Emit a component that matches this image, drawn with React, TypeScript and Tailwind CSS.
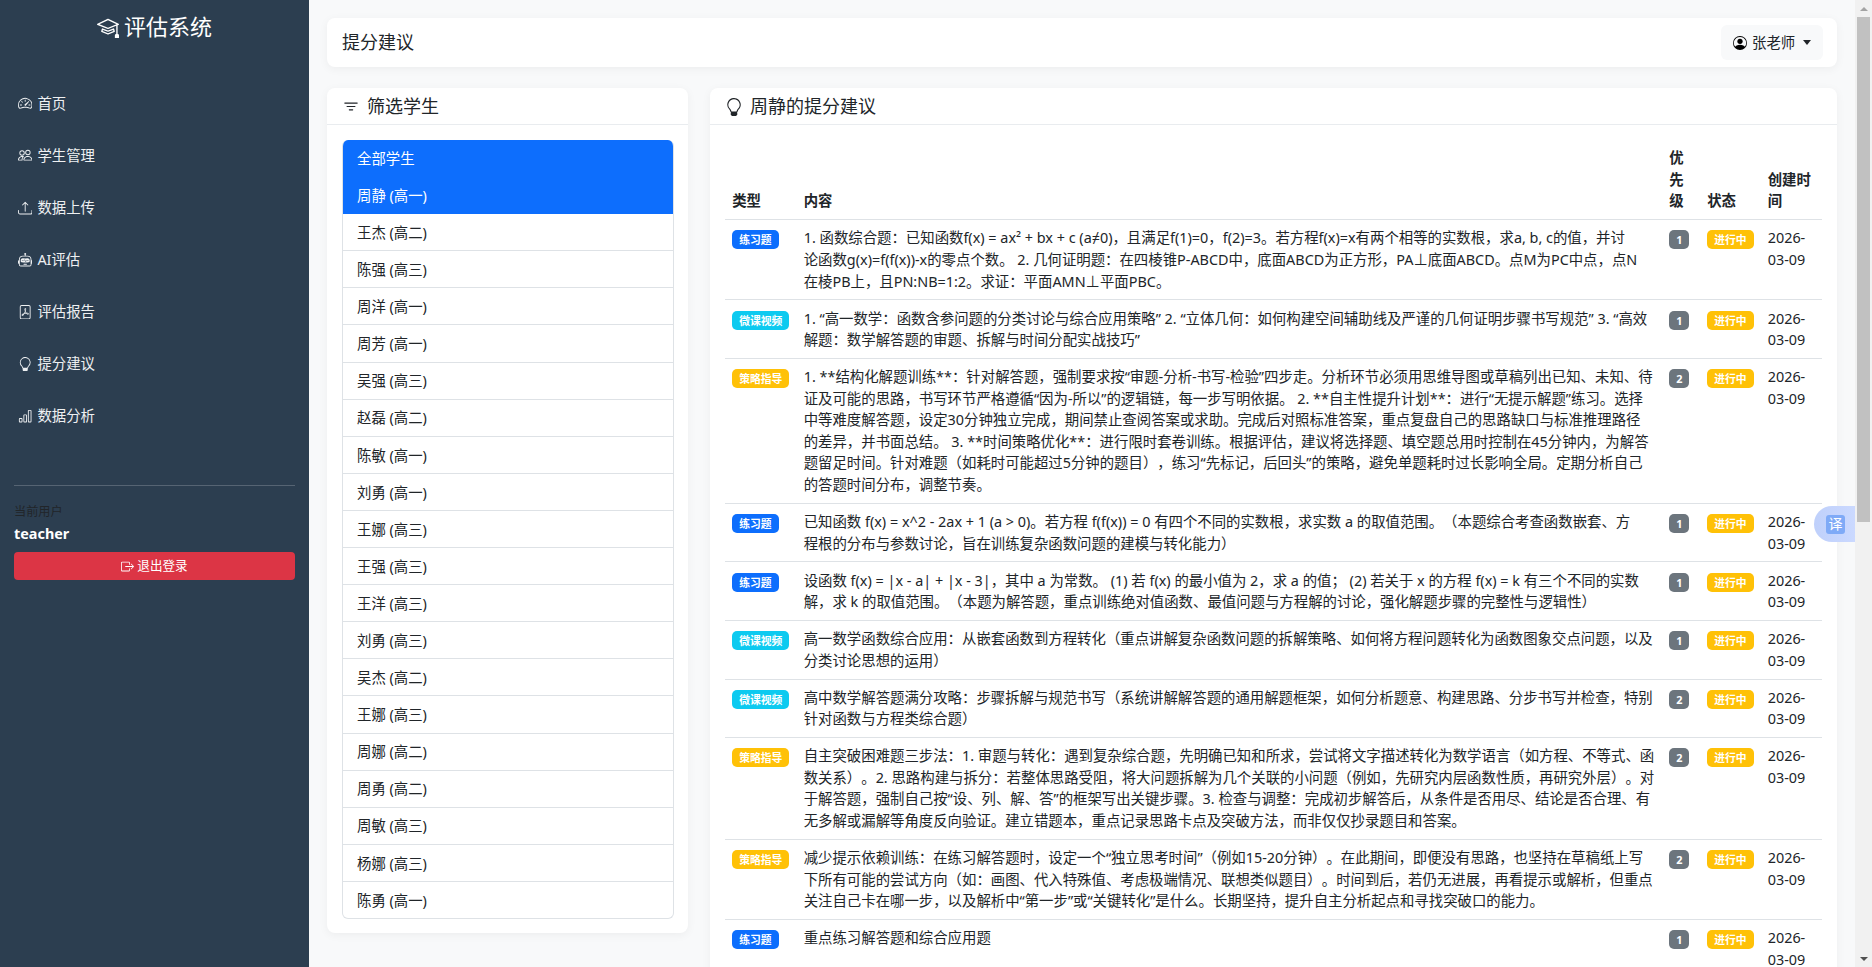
import {
  BsBarChart,
  BsBoxArrowRight,
  BsFilePdf,
  BsFilter,
  BsLightbulb,
  BsMortarboard,
  BsPeople,
  BsPersonCircle,
  BsRobot,
  BsSpeedometer2,
  BsUpload,
} from "react-icons/bs";

const navItems = [
  { label: "首页", icon: BsSpeedometer2 },
  { label: "学生管理", icon: BsPeople },
  { label: "数据上传", icon: BsUpload },
  { label: "AI评估", icon: BsRobot },
  { label: "评估报告", icon: BsFilePdf },
  { label: "提分建议", icon: BsLightbulb },
  { label: "数据分析", icon: BsBarChart },
];

const students = [
  "王杰 (高二)",
  "陈强 (高三)",
  "周洋 (高一)",
  "周芳 (高一)",
  "吴强 (高三)",
  "赵磊 (高二)",
  "陈敏 (高一)",
  "刘勇 (高一)",
  "王娜 (高三)",
  "王强 (高三)",
  "王洋 (高三)",
  "刘勇 (高三)",
  "吴杰 (高二)",
  "王娜 (高三)",
  "周娜 (高二)",
  "周勇 (高二)",
  "周敏 (高三)",
  "杨娜 (高三)",
  "陈勇 (高一)",
];

type Kind = "练习题" | "微课视频" | "策略指导";

const kindColor: Record<Kind, string> = {
  练习题: "bg-[#0d6efd]",
  微课视频: "bg-[#0dcaf0]",
  策略指导: "bg-[#ffc107]",
};

// lines are kept as they break in the table
const rows: { kind: Kind; priority: number; lines: string[] }[] = [
  {
    kind: "练习题",
    priority: 1,
    lines: [
      "1. 函数综合题：已知函数f(x) = ax² + bx + c (a≠0)，且满足f(1)=0，f(2)=3。若方程f(x)=x有两个相等的实数根，求a, b, c的值，并讨",
      "论函数g(x)=f(f(x))-x的零点个数。 2. 几何证明题：在四棱锥P-ABCD中，底面ABCD为正方形，PA⊥底面ABCD。点M为PC中点，点N",
      "在棱PB上，且PN:NB=1:2。求证：平面AMN⊥平面PBC。",
    ],
  },
  {
    kind: "微课视频",
    priority: 1,
    lines: [
      "1. “高一数学：函数含参问题的分类讨论与综合应用策略” 2. “立体几何：如何构建空间辅助线及严谨的几何证明步骤书写规范” 3. “高效",
      "解题：数学解答题的审题、拆解与时间分配实战技巧”",
    ],
  },
  {
    kind: "策略指导",
    priority: 2,
    lines: [
      "1. **结构化解题训练**：针对解答题，强制要求按“审题-分析-书写-检验”四步走。分析环节必须用思维导图或草稿列出已知、未知、待",
      "证及可能的思路，书写环节严格遵循“因为-所以”的逻辑链，每一步写明依据。 2. **自主性提升计划**：进行“无提示解题”练习。选择",
      "中等难度解答题，设定30分钟独立完成，期间禁止查阅答案或求助。完成后对照标准答案，重点复盘自己的思路缺口与标准推理路径",
      "的差异，并书面总结。 3. **时间策略优化**：进行限时套卷训练。根据评估，建议将选择题、填空题总用时控制在45分钟内，为解答",
      "题留足时间。针对难题（如耗时可能超过5分钟的题目），练习“先标记，后回头”的策略，避免单题耗时过长影响全局。定期分析自己",
      "的答题时间分布，调整节奏。",
    ],
  },
  {
    kind: "练习题",
    priority: 1,
    lines: [
      "已知函数 f(x) = x^2 - 2ax + 1 (a > 0)。若方程 f(f(x)) = 0 有四个不同的实数根，求实数 a 的取值范围。（本题综合考查函数嵌套、方",
      "程根的分布与参数讨论，旨在训练复杂函数问题的建模与转化能力）",
    ],
  },
  {
    kind: "练习题",
    priority: 1,
    lines: [
      "设函数 f(x) = |x - a| + |x - 3|，其中 a 为常数。 (1) 若 f(x) 的最小值为 2，求 a 的值； (2) 若关于 x 的方程 f(x) = k 有三个不同的实数",
      "解，求 k 的取值范围。（本题为解答题，重点训练绝对值函数、最值问题与方程解的讨论，强化解题步骤的完整性与逻辑性）",
    ],
  },
  {
    kind: "微课视频",
    priority: 1,
    lines: [
      "高一数学函数综合应用：从嵌套函数到方程转化（重点讲解复杂函数问题的拆解策略、如何将方程问题转化为函数图象交点问题，以及",
      "分类讨论思想的运用）",
    ],
  },
  {
    kind: "微课视频",
    priority: 2,
    lines: [
      "高中数学解答题满分攻略：步骤拆解与规范书写（系统讲解解答题的通用解题框架，如何分析题意、构建思路、分步书写并检查，特别",
      "针对函数与方程类综合题）",
    ],
  },
  {
    kind: "策略指导",
    priority: 2,
    lines: [
      "自主突破困难题三步法：1. 审题与转化：遇到复杂综合题，先明确已知和所求，尝试将文字描述转化为数学语言（如方程、不等式、函",
      "数关系）。2. 思路构建与拆分：若整体思路受阻，将大问题拆解为几个关联的小问题（例如，先研究内层函数性质，再研究外层）。对",
      "于解答题，强制自己按“设、列、解、答”的框架写出关键步骤。3. 检查与调整：完成初步解答后，从条件是否用尽、结论是否合理、有",
      "无多解或漏解等角度反向验证。建立错题本，重点记录思路卡点及突破方法，而非仅仅抄录题目和答案。",
    ],
  },
  {
    kind: "策略指导",
    priority: 2,
    lines: [
      "减少提示依赖训练：在练习解答题时，设定一个“独立思考时间”（例如15-20分钟）。在此期间，即便没有思路，也坚持在草稿纸上写",
      "下所有可能的尝试方向（如：画图、代入特殊值、考虑极端情况、联想类似题目）。时间到后，若仍无进展，再看提示或解析，但重点",
      "关注自己卡在哪一步，以及解析中“第一步”或“关键转化”是什么。长期坚持，提升自主分析起点和寻找突破口的能力。",
    ],
  },
  {
    kind: "练习题",
    priority: 1,
    lines: ["重点练习解答题和综合应用题"],
  },
];

const badge =
  "inline-block whitespace-nowrap rounded-[5px] px-[7px] py-[4px] text-[10.8px] font-bold leading-[11px] text-white align-top mt-[3px]";

export default function App() {
  return (
    <div className="relative flex h-screen overflow-hidden bg-[#f8f9fa] font-['Noto_Sans','Noto_Sans_CJK_SC',sans-serif] text-[14.4px] leading-[21.6px] text-[#212529] [text-spacing-trim:space-all]">
      <Sidebar />
      <main className="flex min-w-0 flex-1 flex-col gap-[21px] overflow-hidden px-[18px] pt-[18px]">
        <header className="flex h-[49px] shrink-0 items-center justify-between rounded-lg bg-white pl-[15px] pr-[14px] shadow-[0_2px_10px_rgba(0,0,0,0.05)]">
          <h1 className="text-[18px] font-normal">提分建议</h1>
          <button className="flex h-[35px] w-[102px] items-center rounded-md bg-[#f8f9fa] pl-3 text-[14.4px]">
            <BsPersonCircle className="size-[14px] text-black" />
            <span className="ml-[5px]">张老师</span>
            <span className="ml-2 size-0 border-x-[4.5px] border-t-[5px] border-x-transparent border-t-[#212529]" />
          </button>
        </header>
        <div className="flex items-start gap-[22px]">
          <FilterCard />
          <AdviceCard />
        </div>
      </main>
      <Scrollbar />
      <div className="absolute right-[17px] top-[506px] flex h-9 w-[41px] items-center rounded-l-[18px] bg-gradient-to-r from-[#bfd0fb] to-[#cbd9ff] pl-[12px]">
        <span className="flex size-[19px] items-center justify-center rounded-[3px] bg-[#7faaf7] text-[14px] leading-none text-white">
          译
        </span>
      </div>
    </div>
  );
}

function Sidebar() {
  return (
    <aside className="flex w-[309px] shrink-0 flex-col bg-[#2c3e50] text-white">
      <div className="flex h-[54px] items-center justify-center gap-[5px] text-[22px]">
        <BsMortarboard className="size-[22px]" />
        <span>评估系统</span>
      </div>
      <nav className="mt-[23.5px] flex flex-col">
        {navItems.map(({ label, icon: Icon }) => (
          <a key={label} className="flex h-[52.1px] items-center gap-[5px] pl-[18px] text-[#eef0f2]">
            <Icon className="size-[14.4px]" />
            <span>{label}</span>
          </a>
        ))}
      </nav>
      <div className="mx-[14px] mt-[43px] border-t border-[#566473] pt-[14px]">
        <div className="text-[12.2px] leading-[24px] text-[#212529]">当前用户</div>
        <div className="font-bold leading-[20px]">teacher</div>
        <button className="mt-[8px] flex h-[28px] w-full items-center justify-center gap-[3px] rounded bg-[#dc3545] text-[12.6px]">
          <BsBoxArrowRight className="size-[13px]" />
          <span>退出登录</span>
        </button>
      </div>
    </aside>
  );
}

function CardHeader({ icon, title }: { icon: React.ReactNode; title: string }) {
  return (
    <div className="flex h-[37px] items-center gap-[7px] border-b border-[#e9ecef] pl-[15px] pt-px text-[18px]">
      {icon}
      <span>{title}</span>
    </div>
  );
}

function FilterCard() {
  return (
    <section className="w-[361px] shrink-0 rounded-lg bg-white shadow-[0_2px_10px_rgba(0,0,0,0.05)]">
      <CardHeader icon={<BsFilter className="size-[18px]" />} title="筛选学生" />
      <div className="pb-[14px] pl-[15px] pr-[14px] pt-[15px]">
        <ul className="overflow-hidden rounded-md border-x border-b border-[#dee2e6]">
          <li className="-mx-px flex h-[37.1px] items-center bg-[#0d6efd] pl-[15px] pt-px text-white">全部学生</li>
          <li className="-mx-px flex h-[37.1px] items-center bg-[#0d6efd] pl-[15px] pt-px text-white">周静 (高一)</li>
          {students.map((s, i) => (
            <li key={i} className="flex h-[37.1px] items-center border-b border-[#dee2e6] pl-[14px] pt-px last:h-[36px] last:border-b-0">
              {s}
            </li>
          ))}
        </ul>
      </div>
    </section>
  );
}

function AdviceCard() {
  return (
    <section className="min-w-0 flex-1 rounded-lg bg-white shadow-[0_2px_10px_rgba(0,0,0,0.05)]">
      <CardHeader icon={<BsLightbulb className="size-[18px]" />} title="周静的提分建议" />
      <div className="px-[15px] pt-[15px]">
        <table className="w-full table-fixed border-collapse">
          <thead>
            <tr className="border-b border-[#dee2e6] align-bottom font-bold">
              <th className="w-[71.5px] px-[7.2px] py-[7.2px] text-left">类型</th>
              <th className="px-[7.2px] py-[7.2px] text-left">内容</th>
              <th className="w-[38px] px-[7.2px] py-[7.2px] text-left">优先级</th>
              <th className="w-[60.5px] px-[7.2px] py-[7.2px] text-left">状态</th>
              <th className="w-[61.5px] px-[7.2px] py-[7.2px] text-left">创建时间</th>
            </tr>
          </thead>
          <tbody>
            {rows.map((row, i) => (
              <tr key={i} className="border-b border-[#dee2e6] align-top">
                <td className="px-[7.2px] py-[7.2px]">
                  <span className={`${badge} ${kindColor[row.kind]}`}>{row.kind}</span>
                </td>
                <td className="whitespace-nowrap px-[7.2px] py-[7.2px]">
                  {row.lines.map((line, j) => (
                    <div key={j}>{line}</div>
                  ))}
                </td>
                <td className="px-[7.2px] py-[7.2px]">
                  <span className={`${badge} bg-[#6c757d]`}>{row.priority}</span>
                </td>
                <td className="px-[7.2px] py-[7.2px]">
                  <span className={`${badge} bg-[#ffc107]`}>进行中</span>
                </td>
                <td className="px-[7.2px] py-[7.2px]">2026-03-09</td>
              </tr>
            ))}
          </tbody>
        </table>
      </div>
    </section>
  );
}

function Scrollbar() {
  return (
    <div className="flex w-[17px] shrink-0 flex-col items-center bg-[#f1f1f1]">
      <div className="flex h-[17px] w-full items-center justify-center">
        <span className="size-0 border-x-[4px] border-b-[4px] border-x-transparent border-b-[#a3a3a3]" />
      </div>
      <div className="h-[505px] w-[13px] bg-[#c1c1c1]" />
      <div className="flex-1" />
      <div className="flex h-[17px] w-full items-center justify-center">
        <span className="size-0 border-x-[4px] border-t-[4px] border-x-transparent border-t-[#505050]" />
      </div>
    </div>
  );
}
